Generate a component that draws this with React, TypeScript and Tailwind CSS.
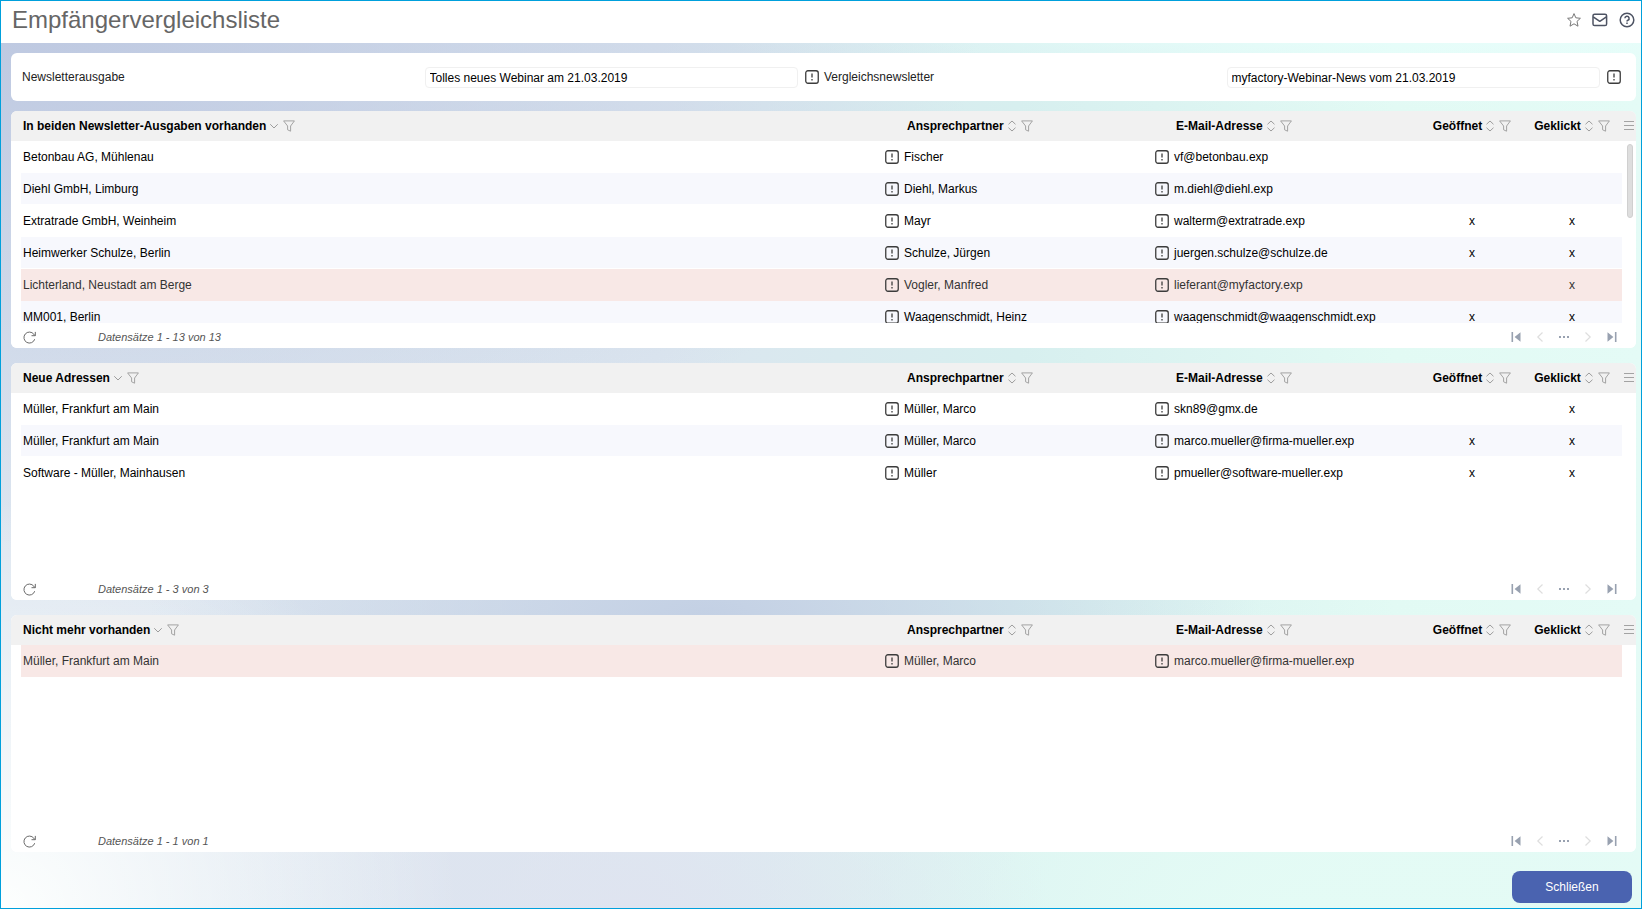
import { clsx } from "clsx";

type Row = {
  name: string;
  contact: string;
  email: string;
  opened?: boolean;
  clicked?: boolean;
  marked?: boolean;
};

const lists: { title: string; total: number; rows: Row[] }[] = [
  {
    title: "In beiden Newsletter-Ausgaben vorhanden",
    total: 13,
    rows: [
      { name: "Betonbau AG, Mühlenau", contact: "Fischer", email: "vf@betonbau.exp" },
      { name: "Diehl GmbH, Limburg", contact: "Diehl, Markus", email: "m.diehl@diehl.exp" },
      { name: "Extratrade GmbH, Weinheim", contact: "Mayr", email: "walterm@extratrade.exp", opened: true, clicked: true },
      { name: "Heimwerker Schulze, Berlin", contact: "Schulze, Jürgen", email: "juergen.schulze@schulze.de", opened: true, clicked: true },
      { name: "Lichterland, Neustadt am Berge", contact: "Vogler, Manfred", email: "lieferant@myfactory.exp", clicked: true, marked: true },
      { name: "MM001, Berlin", contact: "Waagenschmidt, Heinz", email: "waagenschmidt@waagenschmidt.exp", opened: true, clicked: true },
    ],
  },
  {
    title: "Neue Adressen",
    total: 3,
    rows: [
      { name: "Müller, Frankfurt am Main", contact: "Müller, Marco", email: "skn89@gmx.de", clicked: true },
      { name: "Müller, Frankfurt am Main", contact: "Müller, Marco", email: "marco.mueller@firma-mueller.exp", opened: true, clicked: true },
      { name: "Software - Müller, Mainhausen", contact: "Müller", email: "pmueller@software-mueller.exp", opened: true, clicked: true },
    ],
  },
  {
    title: "Nicht mehr vorhanden",
    total: 1,
    rows: [
      { name: "Müller, Frankfurt am Main", contact: "Müller, Marco", email: "marco.mueller@firma-mueller.exp", marked: true },
    ],
  },
];

const InfoButton = ({ label }: { label: string }) => (
  <button type="button" aria-label={label} className="block shrink-0 text-[#3c3c3c]">
    <svg width="14" height="14" viewBox="0 0 14 14" fill="none" stroke="currentColor">
      <rect x="0.75" y="0.75" width="12.5" height="12.5" rx="2.2" strokeWidth="1.3" />
      <path d="M7 3.6v4" strokeWidth="1.3" />
      <path d="M7 9v1.4" strokeWidth="1.3" />
    </svg>
  </button>
);

const FilterButton = () => (
  <button type="button" aria-label="Filtern" className="block text-[#a3a3a3]">
    <svg width="12" height="12" viewBox="0 0 12 12" fill="none" stroke="currentColor" strokeLinejoin="round">
      <path d="M0.6 0.9h10.8L7.6 6v5.2L4.6 9.8V6z" />
    </svg>
  </button>
);

const SortButton = ({ sorted }: { sorted?: boolean }) => (
  <button type="button" aria-label="Sortieren" className="block text-[#9c9c9c]">
    <svg width="8" height="12" viewBox="0 0 8 12" fill="none" stroke="currentColor" strokeLinecap="round" strokeLinejoin="round">
      {sorted ? <path d="M0.5 4.5L4 8l3.5-3.5" /> : <path d="M0.8 4L4 1l3.2 3M0.8 8L4 11l3.2-3" />}
    </svg>
  </button>
);

const HeadCell = ({
  title,
  sorted,
  className,
}: {
  title: string;
  sorted?: boolean;
  className?: string;
}) => (
  <th scope="col" className="p-0">
    <div className={clsx("flex items-center", className)}>
      <span className="mr-1 whitespace-nowrap">{title}</span>
      <SortButton sorted={sorted} />
      <span className="ml-[5px]">
        <FilterButton />
      </span>
    </div>
  </th>
);

const Pager = () => (
  <nav aria-label="Seiten" className="flex text-[#98a1b0]">
    <button type="button" aria-label="Erste Seite" className="flex w-6 justify-center">
      <svg width="10" height="10" viewBox="0 0 10 10" fill="currentColor">
        <path d="M0.5 0h1.6v10H0.5zM9.5 0.3v9.4L3.6 5z" />
      </svg>
    </button>
    <button type="button" aria-label="Vorherige Seite" disabled className="flex w-6 justify-center text-[#dedede]">
      <svg width="10" height="10" viewBox="0 0 10 10" fill="none" stroke="currentColor" strokeWidth="1.2">
        <path d="M7.5 0.5L2.8 5l4.7 4.5" />
      </svg>
    </button>
    <button type="button" aria-label="Seite wählen" className="flex w-6 justify-center">
      <svg width="10" height="10" viewBox="0 0 10 10" fill="currentColor">
        <path d="M0 4h2v2H0zM4 4h2v2H4zM8 4h2v2H8z" />
      </svg>
    </button>
    <button type="button" aria-label="Nächste Seite" disabled className="flex w-6 justify-center text-[#dedede]">
      <svg width="10" height="10" viewBox="0 0 10 10" fill="none" stroke="currentColor" strokeWidth="1.2">
        <path d="M2.5 0.5L7.2 5l-4.7 4.5" />
      </svg>
    </button>
    <button type="button" aria-label="Letzte Seite" className="flex w-6 justify-center">
      <svg width="10" height="10" viewBox="0 0 10 10" fill="currentColor">
        <path d="M0.5 0.3v9.4L6.4 5zM7.9 0h1.6v10H7.9z" />
      </svg>
    </button>
  </nav>
);

const RecipientTable = ({ title, total, rows }: { title: string; total: number; rows: Row[] }) => (
  <section className="relative overflow-hidden rounded-md bg-white">
    <div className="h-[212px] overflow-y-auto [scrollbar-width:none]">
      <table className="w-full table-fixed border-separate border-spacing-0">
        <colgroup>
          <col className="w-[10px]" />
          <col />
          <col className="w-[270px]" />
          <col className="w-[250px]" />
          <col className="w-[100px]" />
          <col className="w-[100px]" />
          <col className="w-[14px]" />
        </colgroup>
        <thead className="sticky top-0 bg-[#f1f1f1] text-left">
          <tr className="h-[30px]">
            <td />
            <HeadCell title={title} sorted className="pl-0.5" />
            <HeadCell title="Ansprechpartner" className="pl-[5px]" />
            <HeadCell title="E-Mail-Adresse" className="pl-1" />
            <HeadCell title="Geöffnet" className="justify-center" />
            <HeadCell title="Geklickt" className="justify-center" />
            <td className="p-0">
              <button type="button" aria-label="Spalten" className="mx-auto block text-[#a3a3a3]">
                <svg width="10" height="10" viewBox="0 0 10 10" stroke="currentColor">
                  <path d="M0 0.5h10M0 4.5h10M0 8.5h10" />
                </svg>
              </button>
            </td>
          </tr>
        </thead>
        <tbody>
          {rows.map((row, i) => {
            const cell = clsx(
              "border-b p-0",
              row.marked
                ? "border-[#f8e8e6] bg-[#f8e8e6] text-[#333]"
                : i % 2
                  ? "border-white bg-[#f7f8fd]"
                  : "border-white"
            );
            return (
              <tr key={i} className="h-8">
                <td className="p-0" />
                <td className={cell}>
                  <div className="flex items-center justify-between pr-[3px] pl-0.5">
                    {row.name}
                    <InfoButton label={row.name} />
                  </div>
                </td>
                <td className={cell}>
                  <div className="flex items-center justify-between pr-[3px] pl-0.5">
                    {row.contact}
                    <InfoButton label={row.contact} />
                  </div>
                </td>
                <td className={cell}>
                  <div className="pl-0.5">{row.email}</div>
                </td>
                <td className={clsx(cell, "text-center")}>{row.opened && "x"}</td>
                <td className={clsx(cell, "text-center")}>{row.clicked && "x"}</td>
                <td className="p-0" />
              </tr>
            );
          })}
        </tbody>
      </table>
    </div>
    {total > rows.length && (
      <div className="absolute top-[33px] right-[3px] h-[74px] w-1.5 rounded-full border border-[#d0d0d0] bg-[#dedede]" />
    )}
    <footer className="flex h-[25px] items-center bg-white px-3 pt-[3px] text-[11px] text-[#555] italic">
      <button type="button" aria-label="Aktualisieren" className="mr-[62px] text-[#6a6a6a]">
        <svg width="13" height="13" viewBox="0 0 13 13" fill="none" stroke="currentColor">
          <path d="M11.7 8.2a5.5 5.5 0 1 1-.9-5L12.2 4.6" />
          <path d="M12.3 0.9v3.8H8.5" />
        </svg>
      </button>
      <span className="flex-1">
        Datensätze 1 - {total} von {total}
      </span>
      <Pager />
    </footer>
  </section>
);

const Field = ({ id, label, value }: { id: string; label: string; value: string }) => (
  <div className="flex items-center pr-[5px]">
    <label htmlFor={id} className="w-1/2 text-[#222]">
      {label}
    </label>
    <input
      id={id}
      defaultValue={value}
      className="mr-[7px] ml-1 h-[21px] min-w-0 flex-1 rounded-sm border border-[#f0f0f0] bg-white px-1 pt-0.5 outline-none"
    />
    <InfoButton label={label} />
  </div>
);

export default function App() {
  return (
    <div className="flex min-h-screen flex-col border border-[#00a0dc] bg-[radial-gradient(ellipse_28%_45%_at_0%_100%,#fdfffe,#fdfffe00),radial-gradient(ellipse_26%_24%_at_38%_100%,#dfe4f0,#dfe4f000),radial-gradient(ellipse_34%_25%_at_43%_68%,#c3d0e4,#c3d0e400),radial-gradient(ellipse_60%_60%_at_0%_0%,#bcc7e0,#bcc7e000),radial-gradient(ellipse_45%_12%_at_85%_0%,#e9fffd,#e9fffd00),radial-gradient(ellipse_50%_35%_at_80%_100%,#e4fbf5,#e4fbf500),linear-gradient(90deg,#dde6f0,#dbe5ef_40%,#d7efef_62%,#e2faf4_85%,#e4fbf6)] font-['Liberation_Sans',Arial,sans-serif] text-xs text-black">
      <header className="flex h-[42px] items-center justify-between bg-white pr-[6px] pb-1 pl-[11px]">
        <h1 className="text-2xl text-[#666]">Empfängervergleichsliste</h1>
        <div className="flex items-center gap-[11px] text-[#4d5363]">
          <button type="button" aria-label="Favorit" className="text-[#777]">
            <svg width="14" height="14" viewBox="0 0 14 14" fill="none" stroke="currentColor" strokeLinejoin="round">
              <path d="M7 0.6l1.8 4.2 4.6.5-3.4 3.1 1 4.8L7 10.8l-4 2.4 1-4.8L0.6 5.3l4.6-.5z" />
            </svg>
          </button>
          <button type="button" aria-label="E-Mail">
            <svg width="16" height="14" viewBox="0 0 16 14" fill="none" stroke="currentColor" strokeWidth="1.5" strokeLinejoin="round">
              <rect x="1" y="1.2" width="13.6" height="11.4" rx="1.6" />
              <path d="M1.2 3.8L7.8 8.3l6.6-4.5" />
            </svg>
          </button>
          <button type="button" aria-label="Hilfe">
            <svg width="16" height="16" viewBox="0 0 16 16" fill="none" stroke="currentColor" strokeWidth="1.5">
              <circle cx="8" cy="8" r="6.8" />
              <path d="M5.9 6.3a2.1 2.1 0 1 1 3 1.9c-.6.3-.9.6-.9 1.2" />
              <path d="M8 10.6v1.4" />
            </svg>
          </button>
        </div>
      </header>

      <main className="flex flex-1 flex-col pt-[10px] pr-[5px] pb-[5px] pl-[10px]">
        <form className="mb-[10px] grid h-12 grid-cols-2 items-center rounded-md bg-white pr-[10px] pl-[11px]">
          <Field id="issue" label="Newsletterausgabe" value="Tolles neues Webinar am 21.03.2019" />
          <Field id="compare" label="Vergleichsnewsletter" value="myfactory-Webinar-News vom 21.03.2019" />
        </form>

        <div className="flex flex-col gap-[15px]">
          {lists.map((list) => (
            <RecipientTable key={list.title} {...list} />
          ))}
        </div>

        <div className="mt-auto flex justify-end pt-[19px] pr-1">
          <button type="button" className="h-8 w-[120px] rounded-lg bg-[#4a63b0] text-white">
            Schließen
          </button>
        </div>
      </main>
    </div>
  );
}
